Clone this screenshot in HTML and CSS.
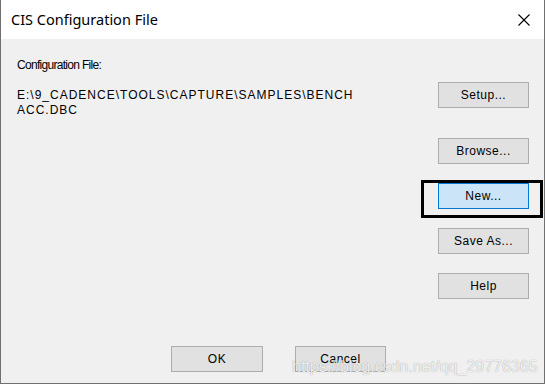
FILE: index.html
```html
<!DOCTYPE html>
<html lang="en">
<head>
    <meta charset="UTF-8">
    <meta name="viewport" content="width=device-width, initial-scale=1.0">
    <title>CIS Configuration File</title>
    <link rel="stylesheet" href="styles.css">
</head>
<body>

<div class="dialog">
    <!-- title bar -->
    <div class="titlebar">
        <span class="title">CIS Configuration File</span>
        <span class="close">
            <svg width="12" height="12" viewBox="0 0 12 12">
                <path d="M0.5 0.5 L11.5 11.5 M11.5 0.5 L0.5 11.5" stroke="#000" stroke-width="1.1" fill="none"/>
            </svg>
        </span>
    </div>

    <div class="content">
        <div class="info">
            <div class="label">Configuration File:</div>
            <div class="path">E:\9_CADENCE\TOOLS\CAPTURE\SAMPLES\BENCH<br>ACC.DBC</div>
        </div>

        <div class="side">
            <button class="btn">Setup...</button>
            <button class="btn browse">Browse...</button>
            <div class="new-wrap">
                <button class="btn focused">New...</button>
                <div class="mark"></div>
            </div>
            <button class="btn">Save As...</button>
            <button class="btn">Help</button>
        </div>
    </div>

    <div class="footer">
        <button class="btn ok">OK</button>
        <button class="btn">Cancel</button>
        <div class="watermark">https://blog.csdn.net/qq_29776365</div>
    </div>
</div>

</body>
</html>
```

FILE: styles.css
```css
body {
    margin: 0;
    background-color: #fff;
    font-family: "Liberation Sans", Arial, sans-serif;
    color: #000;
}
.dialog {
    width: 545px;
    height: 384px;
    box-sizing: border-box;
    border: 1px solid #707070;
    border-top: none;
    background-color: #f0f0f0;
    display: flex;
    flex-direction: column;
}

/* title bar */
.titlebar {
    height: 39px;
    background-color: #fff;
    display: flex;
    align-items: center;
    justify-content: space-between;
    padding: 0 14px 0 10px;
}
.title {
    font-family: "Noto Sans", sans-serif;
    font-size: 14.5px;
    margin-top: -2px;
}
.close {
    display: flex;
    margin-top: 1px;
}

/* main area */
.content {
    flex: 1;
    display: flex;
    justify-content: space-between;
}
.info {
    padding: 19px 0 0 16px;
    font-size: 12px;
}
.label {
    letter-spacing: -0.7px;
    line-height: 15px;
}
.path {
    margin-top: 15px;
    letter-spacing: 1px;
    line-height: 15px;
}
.side {
    display: flex;
    flex-direction: column;
    gap: 19px;
    padding: 43px 15px 0 0;
}
.btn {
    width: 91px;
    height: 26px;
    box-sizing: border-box;
    background-color: #e1e1e1;
    border: 1px solid #adadad;
    font-family: "Liberation Sans", Arial, sans-serif;
    font-size: 12px;
    letter-spacing: 0.5px;
    color: #000;
    padding: 0;
}
.browse {
    margin-top: 11px;
}
.focused {
    background-color: #cce4f7;
    border-color: #0078d7;
}
.new-wrap {
    position: relative;
    display: flex;
}
.mark {
    position: absolute;
    left: -17px;
    top: -3px;
    width: 122px;
    height: 38px;
    box-sizing: border-box;
    border: 3px solid #000;
}

/* bottom buttons */
.footer {
    position: relative;
    display: flex;
    gap: 32px;
    padding: 0 0 11px 170px;
}
.ok {
    width: 92px;
}
.watermark {
    position: absolute;
    left: 291px;
    top: 13px;
    font-size: 16px;
    line-height: 16px;
    color: rgba(255, 255, 255, 0.85);
    text-shadow: 0 0 1px rgba(0, 0, 0, 0.4);
    white-space: nowrap;
}
```
